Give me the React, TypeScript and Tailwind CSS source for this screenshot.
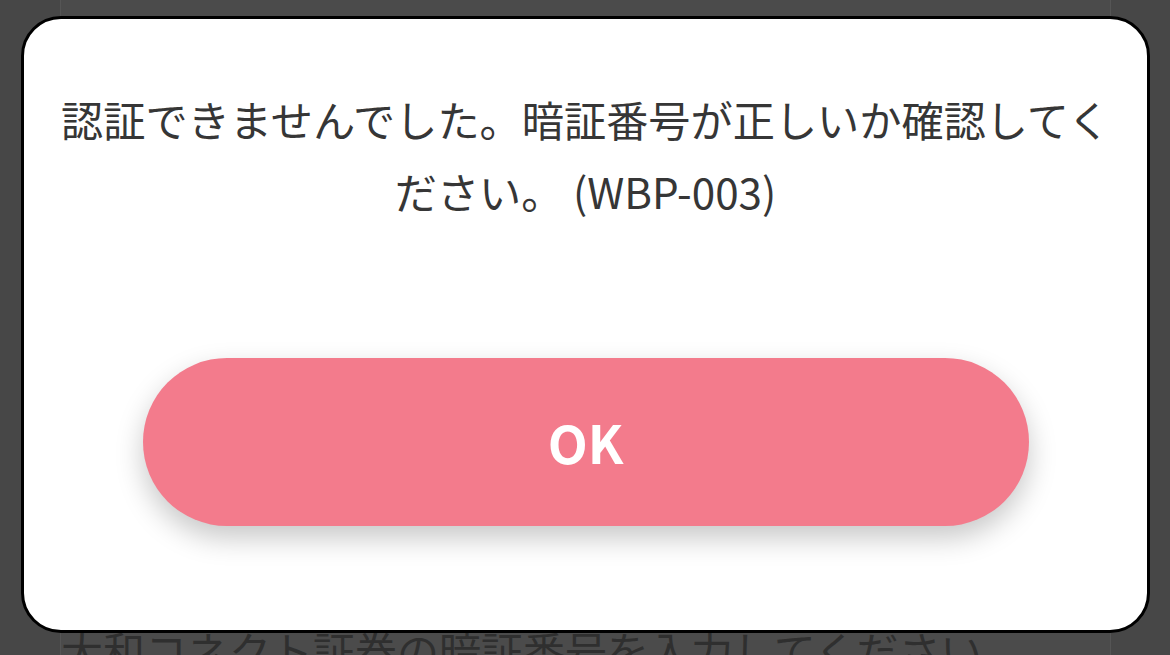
import React from 'react';

const fontStack = { fontFamily: '"Noto Sans CJK JP", "Noto Sans", sans-serif' };

export default function App() {
  return (
    <div
      className="relative w-[1170px] h-[655px] overflow-hidden bg-[#474747]"
      style={fontStack}
    >
      {/* page behind the overlay */}
      <div className="ml-[60px] w-[1051px] h-full border-x border-[#555555] bg-[#4b4b4b] pt-[614px]">
        <p className="text-[42px] leading-[72px] text-[#2f2f2f] whitespace-nowrap">
          大和コネクト証券の暗証番号を入力してください
        </p>
      </div>

      {/* dialog */}
      <div className="absolute left-[21px] top-[16px] w-[1129px] h-[617px] rounded-[40px] border-[3px] border-black bg-white flex flex-col items-center pt-[64px] px-[28px]">
        <p className="w-full text-center text-[42.2px] leading-[72px] font-normal text-[#363636]">
          認証できませんでした。暗証番号が正しいか確認してください。 (WBP-003)
        </p>
        <button
          type="button"
          className="mt-[131px] w-[886px] h-[168px] rounded-full bg-[#f37b8c] text-white text-[52px] font-bold leading-none shadow-[0_12px_28px_rgba(0,0,0,0.22)]"
        >
          OK
        </button>
      </div>
    </div>
  );
}
